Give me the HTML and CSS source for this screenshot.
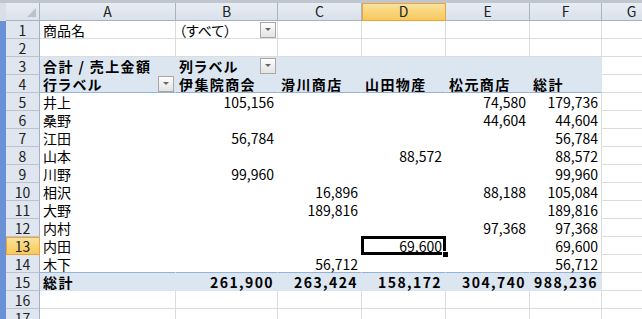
FILE: index.html
```html
<!DOCTYPE html>
<html lang="ja">
<head>
    <meta charset="UTF-8">
    <meta name="viewport" content="width=device-width, initial-scale=1.0">
    <title>ピボットテーブル</title>
    <link rel="stylesheet" href="styles.css">
</head>
<body>

    <div class="screen">
        <div class="edge"></div>
        <div class="sheet">
            <!-- column headers -->
            <div class="corner"></div>
            <div class="colhead">A</div>
            <div class="colhead">B</div>
            <div class="colhead">C</div>
            <div class="colhead active">D</div>
            <div class="colhead">E</div>
            <div class="colhead">F</div>
            <div class="colhead">G</div>

            <!-- 1 -->
            <div class="rowhead">1</div>
            <div class="cell">商品名</div>
            <div class="cell filter">（すべて）<span class="dd"></span></div>
            <div class="cell"></div>
            <div class="cell"></div>
            <div class="cell"></div>
            <div class="cell"></div>
            <div class="cell"></div>

            <!-- 2 -->
            <div class="rowhead">2</div>
            <div class="cell"></div>
            <div class="cell"></div>
            <div class="cell"></div>
            <div class="cell"></div>
            <div class="cell"></div>
            <div class="cell"></div>
            <div class="cell"></div>

            <!-- 3 -->
            <div class="rowhead">3</div>
            <div class="cell band b">合計 / 売上金額</div>
            <div class="cell band b filter">列ラベル<span class="dd"></span></div>
            <div class="cell band"></div>
            <div class="cell band"></div>
            <div class="cell band"></div>
            <div class="cell band"></div>
            <div class="cell"></div>

            <!-- 4 -->
            <div class="rowhead">4</div>
            <div class="cell band b hdline filter">行ラベル<span class="dd"></span></div>
            <div class="cell band b hdline">伊集院商会</div>
            <div class="cell band b hdline">滑川商店</div>
            <div class="cell band b hdline">山田物産</div>
            <div class="cell band b hdline">松元商店</div>
            <div class="cell band b hdline">総計</div>
            <div class="cell"></div>

            <!-- 5 -->
            <div class="rowhead">5</div>
            <div class="cell pv">井上</div>
            <div class="cell pv n">105,156</div>
            <div class="cell pv n"></div>
            <div class="cell pv n"></div>
            <div class="cell pv n">74,580</div>
            <div class="cell pv n last">179,736</div>
            <div class="cell"></div>

            <!-- 6 -->
            <div class="rowhead">6</div>
            <div class="cell pv">桑野</div>
            <div class="cell pv n"></div>
            <div class="cell pv n"></div>
            <div class="cell pv n"></div>
            <div class="cell pv n">44,604</div>
            <div class="cell pv n last">44,604</div>
            <div class="cell"></div>

            <!-- 7 -->
            <div class="rowhead">7</div>
            <div class="cell pv">江田</div>
            <div class="cell pv n">56,784</div>
            <div class="cell pv n"></div>
            <div class="cell pv n"></div>
            <div class="cell pv n"></div>
            <div class="cell pv n last">56,784</div>
            <div class="cell"></div>

            <!-- 8 -->
            <div class="rowhead">8</div>
            <div class="cell pv">山本</div>
            <div class="cell pv n"></div>
            <div class="cell pv n"></div>
            <div class="cell pv n">88,572</div>
            <div class="cell pv n"></div>
            <div class="cell pv n last">88,572</div>
            <div class="cell"></div>

            <!-- 9 -->
            <div class="rowhead">9</div>
            <div class="cell pv">川野</div>
            <div class="cell pv n">99,960</div>
            <div class="cell pv n"></div>
            <div class="cell pv n"></div>
            <div class="cell pv n"></div>
            <div class="cell pv n last">99,960</div>
            <div class="cell"></div>

            <!-- 10 -->
            <div class="rowhead">10</div>
            <div class="cell pv">相沢</div>
            <div class="cell pv n"></div>
            <div class="cell pv n">16,896</div>
            <div class="cell pv n"></div>
            <div class="cell pv n">88,188</div>
            <div class="cell pv n last">105,084</div>
            <div class="cell"></div>

            <!-- 11 -->
            <div class="rowhead">11</div>
            <div class="cell pv">大野</div>
            <div class="cell pv n"></div>
            <div class="cell pv n">189,816</div>
            <div class="cell pv n"></div>
            <div class="cell pv n"></div>
            <div class="cell pv n last">189,816</div>
            <div class="cell"></div>

            <!-- 12 -->
            <div class="rowhead">12</div>
            <div class="cell pv">内村</div>
            <div class="cell pv n"></div>
            <div class="cell pv n"></div>
            <div class="cell pv n"></div>
            <div class="cell pv n">97,368</div>
            <div class="cell pv n last">97,368</div>
            <div class="cell"></div>

            <!-- 13 -->
            <div class="rowhead active">13</div>
            <div class="cell pv">内田</div>
            <div class="cell pv n"></div>
            <div class="cell pv n"></div>
            <div class="cell pv n sel">69,600</div>
            <div class="cell pv n"></div>
            <div class="cell pv n last">69,600</div>
            <div class="cell"></div>

            <!-- 14 -->
            <div class="rowhead">14</div>
            <div class="cell pv hdline">木下</div>
            <div class="cell pv n hdline"></div>
            <div class="cell pv n hdline">56,712</div>
            <div class="cell pv n hdline"></div>
            <div class="cell pv n hdline"></div>
            <div class="cell pv n hdline last">56,712</div>
            <div class="cell"></div>

            <!-- 15 -->
            <div class="rowhead">15</div>
            <div class="cell band b">総計</div>
            <div class="cell band b n">261,900</div>
            <div class="cell band b n">263,424</div>
            <div class="cell band b n">158,172</div>
            <div class="cell band b n">304,740</div>
            <div class="cell band b n">988,236</div>
            <div class="cell"></div>

            <!-- 16 -->
            <div class="rowhead">16</div>
            <div class="cell"></div>
            <div class="cell"></div>
            <div class="cell"></div>
            <div class="cell"></div>
            <div class="cell"></div>
            <div class="cell"></div>
            <div class="cell"></div>

            <!-- 17 -->
            <div class="rowhead">17</div>
            <div class="cell"></div>
            <div class="cell"></div>
            <div class="cell"></div>
            <div class="cell"></div>
            <div class="cell"></div>
            <div class="cell"></div>
            <div class="cell"></div>
        </div>
    </div>

</body>
</html>
```

FILE: styles.css
```css
html,body{
    margin: 0;
    background-color: #ffffff;
}
body{
    font-family: "Noto Sans CJK JP", sans-serif;
    font-size: 14px;
    font-feature-settings: "palt";
    color: #000000;
}
.screen{
    display: flex;
    width: 642px;
    height: 319px;
    overflow: hidden;
    box-sizing: border-box;
    border-top: 3px solid #bfc6cf;
}
.edge{
    flex: none;
    width: 6px;
    background: linear-gradient(#dadfe6 0 18px, #6a90d6 18px);
}
.sheet{
    flex: none;
    display: grid;
    grid-template-columns: 34px 136px 102px 84px 84px 84px 72px 60px;
    grid-auto-rows: 18px;
}
.corner,
.colhead,
.rowhead,
.cell{
    box-sizing: border-box;
    display: flex;
    align-items: center;
    white-space: nowrap;
    line-height: 17px;
}
.corner{
    justify-content: flex-end;
    align-items: flex-end;
    padding: 0 3px 3px 0;
    background: linear-gradient(#e8edf4, #dbe2ec);
    border-right: 1px solid #a9b4c3;
    border-bottom: 1px solid #a9b4c3;
}
.corner::after{
    content: "";
    border-left: 9px solid transparent;
    border-bottom: 9px solid #b9c1cc;
}
.colhead{
    justify-content: center;
    background: linear-gradient(#e8edf4, #d9e1eb);
    border-right: 1px solid #a9b4c3;
    border-bottom: 1px solid #a9b4c3;
    color: #222222;
}
.rowhead{
    justify-content: center;
    background-color: #dfe6ef;
    border-right: 1px solid #a2b0c2;
    border-bottom: 1px solid #bac4d1;
    color: #222222;
    padding-top: 1px;
}
.active{
    background: linear-gradient(#fbe3a0, #f6c95b);
    border-color: #f0a23a;
    box-shadow: inset 1px 1px 0 #f0a23a;
}
.cell{
    padding: 1px 3px 0 3px;
    border-right: 1px solid #dadcdd;
    border-bottom: 1px solid #dadcdd;
}
.n{
    justify-content: flex-end;
}
.b{
    font-weight: bold;
    letter-spacing: 1.4px;
}
.band{
    background-color: #dce6f1;
    border-color: transparent;
}
.pv{
    background-color: #ffffff;
    border-color: transparent;
}
.pv.last{
    border-right-color: #dadcdd;
}
.hdline{
    border-bottom-color: #95b3d7;
}
.filter{
    justify-content: space-between;
    padding-right: 1px;
}
.dd{
    flex: none;
    box-sizing: border-box;
    width: 16px;
    height: 16px;
    margin-top: -1px;
    display: flex;
    align-items: center;
    justify-content: center;
    border: 1px solid #a7a7a7;
    background: linear-gradient(#fdfdfd, #e3e3e3);
}
.dd::after{
    content: "";
    border-left: 3px solid transparent;
    border-right: 3px solid transparent;
    border-top: 3px solid #666666;
}
.sel{
    position: relative;
}
.sel::before{
    content: "";
    position: absolute;
    left: -1px;
    top: -1px;
    right: -1px;
    bottom: -1px;
    border: 3px solid #000000;
}
.sel::after{
    content: "";
    position: absolute;
    right: -4px;
    bottom: -4px;
    width: 5px;
    height: 5px;
    background-color: #000000;
    border: 1px solid #ffffff;
}
```
